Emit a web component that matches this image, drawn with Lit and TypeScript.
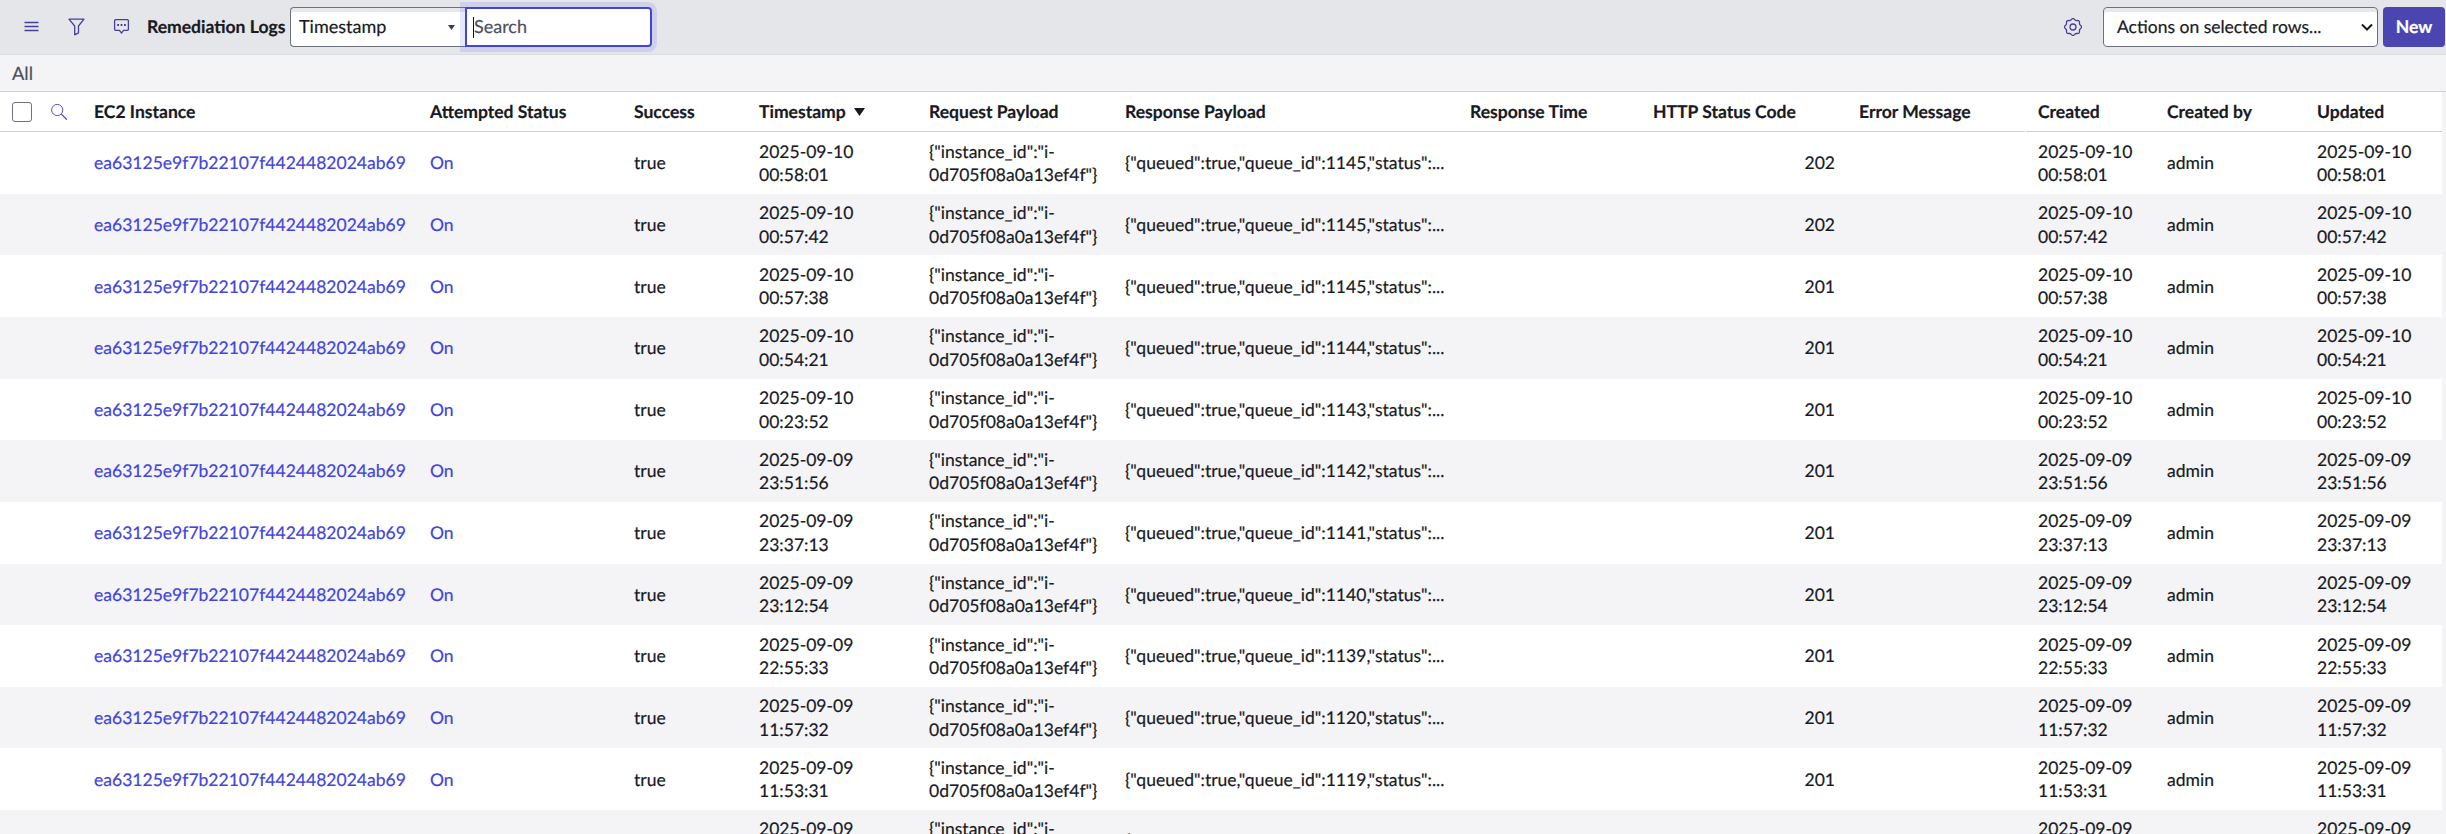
import { LitElement, html, css, svg } from "lit";
import { customElement } from "lit/decorators.js";

interface LogRow { ts: [string, string]; queue: number; code: number; }

const D10 = "2025-09-10";
const D09 = "2025-09-09";
const ROWS: LogRow[] = [
  { ts: [D10, "00:58:01"], queue: 1145, code: 202 },
  { ts: [D10, "00:57:42"], queue: 1145, code: 202 },
  { ts: [D10, "00:57:38"], queue: 1145, code: 201 },
  { ts: [D10, "00:54:21"], queue: 1144, code: 201 },
  { ts: [D10, "00:23:52"], queue: 1143, code: 201 },
  { ts: [D09, "23:51:56"], queue: 1142, code: 201 },
  { ts: [D09, "23:37:13"], queue: 1141, code: 201 },
  { ts: [D09, "23:12:54"], queue: 1140, code: 201 },
  { ts: [D09, "22:55:33"], queue: 1139, code: 201 },
  { ts: [D09, "11:57:32"], queue: 1120, code: 201 },
  { ts: [D09, "11:53:31"], queue: 1119, code: 201 },
  { ts: [D09, "11:52:10"], queue: 1118, code: 201 },
];

const COLUMNS = [
  "EC2 Instance", "Attempted Status", "Success", "Timestamp", "Request Payload",
  "Response Payload", "Response Time", "HTTP Status Code", "Error Message",
  "Created", "Created by", "Updated",
];

@customElement("app-root")
export class AppRoot extends LitElement {
  static styles = css`
    :host {
      display: block;
      height: 834px;
      overflow: hidden;
      background: #f4f4f7;
      color: #181a1f;
      font-family: Lato, sans-serif;
      font-size: 17.55px;
      line-height: 23.5px;
      text-rendering: geometricPrecision;
      -webkit-text-stroke: 0.2px;
    }
    * { box-sizing: border-box; }
    svg { display: block; fill: none; }
    .toolbar {
      display: flex;
      align-items: center;
      height: 55px;
      padding: 0 1px 0 22px;
      background: #e5e6ea;
      border-bottom: 1px solid #dcdde2;
    }
    .icon { flex: none; stroke: #45409c; }
    .filter { margin-left: 25px; }
    .chat { margin-left: 27px; }
    .title { margin-left: 17px; font-weight: 700; width: 143px; white-space: nowrap; }
    .select {
      display: flex;
      align-items: center;
      justify-content: space-between;
      height: 40px;
      border: 1px solid #6c7080;
      border-radius: 4px;
      background: #fff;
      box-shadow: inset 0 4px 0 #e8e8ec;
    }
    .field { width: 175px; padding: 0 10px 0 8px; border-radius: 4px 0 0 4px; border-right: 0; font-size: 18px; }
    .search {
      display: flex;
      align-items: center;
      width: 187px;
      height: 40px;
      padding-left: 6px;
      border: 2px solid #3f46dd;
      border-radius: 0 4px 4px 0;
      background: #fff;
      color: #4b4f5e;
      font-size: 18px;
      box-shadow: 0 0 0 5px rgba(80, 85, 235, 0.14);
    }
    .caret { width: 1px; height: 21px; background: #111; }
    .spacer { flex: 1; }
    .actions { width: 275px; margin: 0 5px 0 21px; padding: 0 4px 0 13px; font-size: 17.5px; }
    .new {
      display: flex;
      align-items: center;
      justify-content: center;
      width: 62px;
      height: 40px;
      border-radius: 4px;
      background: #4b45b2;
      color: #fff;
      font-weight: 700;
    }
    .crumb { height: 37px; padding: 7px 0 0 12px; color: #4b4f5e; font-size: 18.3px; border-bottom: 1px solid #cdced6; }
    .grid { width: 2442px; background: #fff; }
    .head, .row {
      display: grid;
      grid-template-columns: 45px 49px 336px 204px 125px 170px 196px 345px 183px 206px 179px 129px 150px 1fr;
      align-items: center;
    }
    .head {
      height: 40.2px;
      padding-bottom: 1px;
      font-weight: 700;
      white-space: nowrap;
      background:
        linear-gradient(#cdced6, #cdced6) left bottom / 2025px 1px no-repeat,
        linear-gradient(#cdced6, #cdced6) right bottom / 416px 1px no-repeat;
    }
    .check { width: 20px; height: 20px; margin-left: 12px; border: 1px solid #6c7080; border-radius: 3px; }
    .lens { margin-left: 5px; stroke: #5a55c4; }
    .sorted { display: flex; align-items: center; }
    .arrow { margin-left: 8px; }
    .row { height: 61.63px; }
    .row:nth-child(odd) { background: #f4f4f7; }
    .link { color: #4145dd; }
    .code { padding-right: 24px; text-align: right; }
  `;

  private renderHeader(label: string) {
    return label === "Timestamp"
      ? html`<div class="sorted">${label}<svg class="arrow" width="11" height="8" viewBox="0 0 11 8"><path d="M0 0H11L5.5 8Z" fill="#181a1f"/></svg></div>`
      : html`<div>${label}</div>`;
  }

  private renderRow(r: LogRow) {
    const time = html`<div>${r.ts[0]}<br>${r.ts[1]}</div>`;
    return html`<div class="row">
      <div></div><div></div>
      <div class="link">ea63125e9f7b22107f4424482024ab69</div>
      <div class="link">On</div>
      <div>true</div>
      ${time}
      <div>{"instance_id":"i-<br>0d705f08a0a13ef4f"}</div>
      <div>{"queued":true,"queue_id":${r.queue},"status":...</div>
      <div></div>
      <div class="code">${r.code}</div>
      <div></div>
      ${time}
      <div>admin</div>
      ${time}
    </div>`;
  }

  private gear() {
    const pts: string[] = [];
    for (let i = 0; i <= 96; i++) {
      const a = (i / 96) * Math.PI * 2;
      const r = 7.8 + 0.65 * Math.cos(8 * a);
      pts.push(`${(9 + r * Math.cos(a)).toFixed(2)} ${(9 + r * Math.sin(a)).toFixed(2)}`);
    }
    return svg`<path d="M${pts.join("L")}Z"/><circle cx="9" cy="9" r="3"/>`;
  }

  render() {
    return html`
      <div class="toolbar">
        <svg class="icon" width="18" height="12" viewBox="0 0 18 12"><path stroke-width="1.4" d="M2.5 1.5H16.5M2.5 5.5H16.5M2.5 9.5H16.5"/></svg>
        <svg class="icon filter" width="20" height="18" viewBox="0 0 20 18"><path stroke-width="1.3" stroke-linejoin="round" d="M4 1.2H19L13.5 8V14.8L9.7 16.8V8Z"/></svg>
        <svg class="icon chat" width="18" height="18" viewBox="0 0 18 18"><path stroke-width="1.3" d="M3.6 1.7H15.4Q16.4 1.7 16.4 2.7V11.3Q16.4 12.3 15.4 12.3H11.6L9.5 15L7.4 12.3H3.6Q2.6 12.3 2.6 11.3V2.7Q2.6 1.7 3.6 1.7Z"/><path stroke-width="1.8" d="M5.2 7H7M8.6 7H10.4M12 7H13.8"/></svg>
        <div class="title">Remediation Logs</div>
        <div class="select field">Timestamp<svg width="7" height="5" viewBox="0 0 7 5"><path d="M0 0H7L3.5 5Z" fill="#3b3e4a"/></svg></div>
        <div class="search"><span class="caret"></span>Search</div>
        <div class="spacer"></div>
        <svg class="icon" width="18" height="18" viewBox="0 0 18 18" stroke-width="1.3">${this.gear()}</svg>
        <div class="select actions">Actions on selected rows...<svg width="12" height="8" viewBox="0 0 12 8"><path d="M1 1.5L6 6.5L11 1.5" stroke="#181a1f" stroke-width="2"/></svg></div>
        <div class="new">New</div>
      </div>
      <div class="crumb">All</div>
      <div class="grid">
        <div class="head">
          <div class="check"></div>
          <svg class="icon lens" width="18" height="18" viewBox="0 0 18 18"><circle cx="7.2" cy="7" r="5.6"/><path stroke-width="1.3" d="M11.2 11L17 16.7"/></svg>
          ${COLUMNS.map((c) => this.renderHeader(c))}
        </div>
        ${ROWS.map((r) => this.renderRow(r))}
      </div>`;
  }
}
